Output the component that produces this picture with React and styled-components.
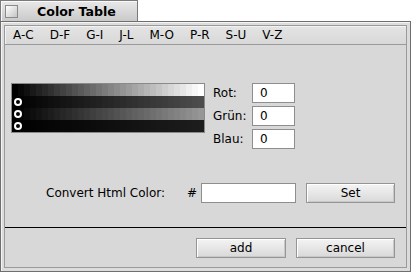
import React from 'react'
import styled, { createGlobalStyle } from 'styled-components'

const Global = createGlobalStyle`
    html, body { margin: 0; padding: 0; background: #fff; }
`

const Screen = styled.div`
    width: 411px;
    height: 272px;
    display: flex;
    flex-direction: column;
    font-family: "DejaVu Sans", "Liberation Sans", sans-serif;
    font-size: 12px;
    color: #000;
`

const TabRow = styled.div`
    display: flex;
    height: 21px;
`

const Tab = styled.div`
    width: 138px;
    box-sizing: border-box;
    border: 1px solid #7a7a7a;
    border-bottom: none;
    background: linear-gradient(#e8e8e8, #cacaca);
    box-shadow: inset 1px 1px #fafafa;
    display: flex;
    align-items: flex-start;
    padding: 4px 0 0 4px;
`

const CloseBox = styled.div`
    width: 13px;
    height: 13px;
    box-sizing: border-box;
    border: 1px solid #8a8a8a;
    background: linear-gradient(135deg, #ffffff, #c4c4c4);
`

const Title = styled.div`
    margin-left: 19px;
    font-weight: bold;
    font-size: 12.6px;
    line-height: 14px;
`

const Frame = styled.div`
    flex: 1;
    display: flex;
    border: 1px solid #6e6e6e;
    padding: 3px;
    background: #dcdcdc;
    box-shadow: inset 1px 1px #f4f4f4;
`

const Body = styled.div`
    flex: 1;
    display: flex;
    flex-direction: column;
    border: 1px solid #9a9a9a;
    background: #d8d8d8;
`

const MenuBar = styled.div`
    height: 18px;
    display: flex;
    align-items: center;
    border-bottom: 1px solid #9a9a9a;
    background: linear-gradient(#e4e4e4, #d8d8d8);
    box-shadow: inset 1px 1px #f2f2f2;
`

const MenuItem = styled.span`
    padding: 0 8px;
    line-height: 14px;
`

const ColorSection = styled.div`
    margin-top: 38px;
    padding-left: 6px;
    display: flex;
    align-items: flex-start;
`

const Ramp = styled.div`
    width: 192px;
    border: 1px solid #8a8a8a;
    display: flex;
    flex-direction: column;
`

const RampRow = styled.div`
    position: relative;
    height: 12px;
    display: flex;
`

const Cell = styled.div`
    width: 6px;
    height: 12px;
`

const Marker = styled.span`
    position: absolute;
    left: 2px;
    top: 2px;
    width: 4px;
    height: 4px;
    border: 2px solid #fff;
    border-radius: 50%;
    background: #000;
`

const Fields = styled.div`
    margin-left: 8px;
    display: grid;
    grid-template-columns: 39px 43px;
    grid-auto-rows: 20px;
    row-gap: 3px;
    align-items: center;
`

const Field = styled.div`
    width: ${p => p.$w || 43}px;
    height: 20px;
    box-sizing: border-box;
    border: 1px solid #8e8e8e;
    background: #fff;
    padding-left: 7px;
    display: flex;
    align-items: center;
`

const ConvertRow = styled.div`
    margin-top: 34px;
    padding-left: 41px;
    height: 20px;
    display: flex;
    align-items: center;
`

const Label = styled.span`
    width: ${p => p.$w}px;
    flex: none;
`

const Button = styled.div`
    width: ${p => p.$w}px;
    height: 20px;
    margin-left: ${p => p.$ml || 0}px;
    box-sizing: border-box;
    border: 1px solid #959595;
    background: linear-gradient(#f4f4f4, #d9d9d9);
    box-shadow: inset 1px 1px #fff, inset -1px -1px #c8c8c8;
    display: flex;
    align-items: center;
    justify-content: center;
`

const Separator = styled.div`
    margin-top: 24px;
    height: 1px;
    background: #000;
`

const ButtonRow = styled.div`
    margin-top: 10px;
    padding-right: 11px;
    display: flex;
    justify-content: flex-end;
`

const menus = ['A-C', 'D-F', 'G-I', 'J-L', 'M-O', 'P-R', 'S-U', 'V-Z']

// luminance weights: the screenshot is greyscale
const rows = [
    { w: 1, marker: false },
    { w: 0.299, marker: true },
    { w: 0.587, marker: true },
    { w: 0.114, marker: true },
]

function shade(w, i) {
    const v = Math.round(w * (i * 255) / 31)
    return `rgb(${v},${v},${v})`
}

export default function App() {
    return (
        <Screen>
            <Global />
            <TabRow>
                <Tab>
                    <CloseBox />
                    <Title>Color Table</Title>
                </Tab>
            </TabRow>
            <Frame>
                <Body>
                    <MenuBar>
                        {menus.map(m => <MenuItem key={m}>{m}</MenuItem>)}
                    </MenuBar>
                    <ColorSection>
                        <Ramp>
                            {rows.map((r, ri) => (
                                <RampRow key={ri}>
                                    {Array.from({ length: 32 }, (_, i) => (
                                        <Cell key={i} style={{ background: shade(r.w, i) }} />
                                    ))}
                                    {r.marker && <Marker />}
                                </RampRow>
                            ))}
                        </Ramp>
                        <Fields>
                            <span>Rot:</span><Field>0</Field>
                            <span>Grün:</span><Field>0</Field>
                            <span>Blau:</span><Field>0</Field>
                        </Fields>
                    </ColorSection>
                    <ConvertRow>
                        <Label $w={141}>Convert Html Color:</Label>
                        <Label $w={14}>#</Label>
                        <Field $w={95} />
                        <Button $w={89} $ml={10}>Set</Button>
                    </ConvertRow>
                    <Separator />
                    <ButtonRow>
                        <Button $w={90}>add</Button>
                        <Button $w={99} $ml={10}>cancel</Button>
                    </ButtonRow>
                </Body>
            </Frame>
        </Screen>
    )
}
